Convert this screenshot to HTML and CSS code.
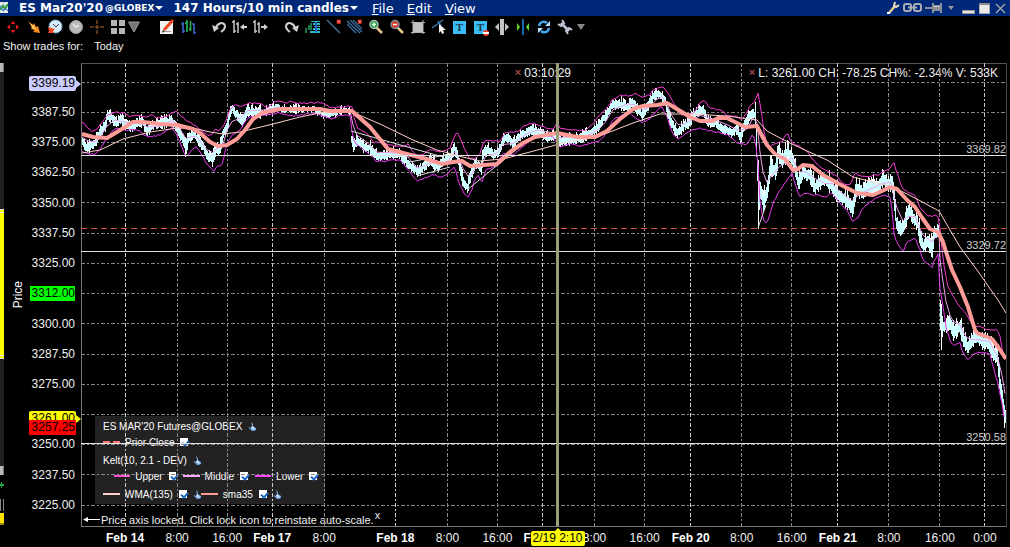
FILE: index.html
```
<!DOCTYPE html>
<html lang="en">

<head>
    <meta charset="UTF-8">
    <meta name="viewport" content="width=device-width, initial-scale=1.0">
    <title>ES Mar20'20 @GLOBEX</title>
    <link rel="stylesheet" href="styles.css">
</head>

<body>
    <header class="title-bar">
        <svg class="app-icon" width="8" height="14" viewBox="0 0 8 14"><path fill="#e8eef0" d="M0 1h8v11H0z"/><path fill="#b0c4cc" d="M0 4h8v1H0zM0 8h8v1H0zM3 1h1v11H3z"/><path fill="none" stroke="#2e9c3a" stroke-width="2" d="M0 9l3-4 2 3 3-5"/><path fill="none" stroke="#3a6ed0" d="M0 5l3 5 2-3 3 3"/></svg>
        <button type="button" class="title-button symbol">ES Mar20'20 <small>@GLOBEX</small><i class="caret"></i></button>
        <button type="button" class="title-button period">147 Hours/10 min candles<i class="caret"></i></button>
        <nav class="menu">
            <a href="#file"><u>F</u>ile</a>
            <a href="#edit"><u>E</u>dit</a>
            <a href="#view"><u>V</u>iew</a>
        </nav>
        <div class="window-tools">
            <button type="button" aria-label="Configure"><svg width="14" height="14" viewBox="0 0 14 14"><path fill="none" stroke="#e6cf96" stroke-width="2.4" d="M3 12l6-7"/><path fill="none" stroke="#eee0b8" stroke-width="2" d="M9 1L8 5l2 1 3-2"/><path fill="#fff" d="M1 11h3v2H1z"/></svg></button>
            <button type="button" aria-label="Link"><svg width="20" height="12" viewBox="0 0 20 12"><g fill="none" stroke="#a9acb4" stroke-width="2"><rect x="2" y="2" width="7" height="7" rx="2"/><rect x="12" y="2" width="7" height="7" rx="2"/><path d="M6 5.500h9"/></g></svg></button>
            <button type="button" aria-label="Pin"><svg width="20" height="12" viewBox="0 0 20 12"><path fill="#8d8f96" d="M1 5h8v2H1zM8 1h2v10H8zM10 3h7v6h-7zM16 1h2v10h-2z"/><path fill="#c5c7cb" d="M10 4h6v1h-6z"/></svg></button>
            <i class="caret dim"></i>
            <button type="button" class="window-button" aria-label="Minimize"><svg width="14" height="14" viewBox="0 0 14 14"><path fill="#e3e3e3" stroke="#999" d="M.5 9.500h12v3H.5z"/></svg></button>
            <button type="button" class="window-button" aria-label="Maximize"><svg width="14" height="14" viewBox="0 0 14 14"><path fill="#e9e9e9" stroke="#aaa" d="M1.500 2.500h10v10h-10z"/><path fill="#8c8c8c" d="M1 2h11v2H1z"/></svg></button>
            <button type="button" class="window-button" aria-label="Close"><svg width="14" height="14" viewBox="0 0 14 14"><path stroke="#aaa" stroke-width="1.300" d="M2 3l9 9M11 3l-9 9"/></svg></button>
        </div>
    </header>

    <div class="toolbar">
        <button type="button" aria-label="Move"><svg viewBox="0 0 16 16"><path fill="#f01818" d="M8 2l2.500 3h-5zM8 14l2.500-3h-5zM2 8l3-2.500v5zM14 8l-3-2.500v5z"/></svg></button>
        <button type="button" aria-label="Trade"><svg viewBox="0 0 16 16"><path fill="#f58a1c" d="M2 2l5 4 1-2 2 4 2-1 2 7-7-1 2-2-4-1 1-2z"/><path fill="#ffc65a" d="M4 4l4 3 3 5-5-3z"/></svg></button>
        <button type="button" aria-label="Active alert"><svg viewBox="0 0 16 16"><circle cx="8.500" cy="7.500" r="6.500" fill="#d8eefa" stroke="#7db4d6"/><path fill="none" stroke="#334" d="M6 5l3 3 3-3"/><path fill="#f04a22" d="M1 8l3 1 4 1-2 2 1 2H1l1-2z"/></svg></button>
        <button type="button" aria-label="Alert"><svg viewBox="0 0 16 16"><circle cx="8" cy="8" r="6.500" fill="#b9b9b9" stroke="#a2a2a2"/><path fill="none" stroke="#eee" stroke-width="1.400" d="M5 5l3 3 3-2"/></svg></button>
        <button type="button" aria-label="Crosshair"><svg viewBox="0 0 16 16"><path stroke="#7a4a22" stroke-width="1.500" stroke-dasharray="4 1" d="M1 8h14M8 1v14"/></svg></button>
        <button type="button" aria-label="Layout"><svg viewBox="0 0 16 16"><path fill="#b4b4b4" d="M1 1h6v6H1zM9 1h6v6H9zM1 9h6v6H1zM9 9h6v6H9z"/></svg></button>
        <button type="button" class="narrow" aria-label="More layouts"><svg viewBox="0 0 12 16"><path fill="#777" stroke="#999" d="M.5 3h11L6 13z"/></svg></button>
        <span class="space wide"></span>
        <button type="button" aria-label="Draw"><svg viewBox="0 0 16 16"><path fill="#f2f2f2" d="M1 2h13v13H1z"/><path stroke="#999" d="M3 12.500h9"/><path stroke="#e84a1c" stroke-width="3" d="M14 1L5 11"/><path fill="#333" d="M3 14l1-3 2 1z"/></svg></button>
        <button type="button" aria-label="Bar style"><svg viewBox="0 0 16 16"><path fill="none" stroke="#3a66d0" stroke-width="1.600" d="M1 5h2M3 3v11M3 12h2M12 5h2v9h2"/><path fill="none" stroke="#22a84a" stroke-width="1.800" d="M5 4h2M7 1v12M9 10h2M10.500 2v10"/></svg></button>
        <span class="space"></span>
        <button type="button" aria-label="Undo"><svg viewBox="0 0 16 16"><path fill="none" stroke="#d0d0d0" stroke-width="2" d="M5 9c1-5 8-7 9-2 0 3-1 4-4 6"/><path fill="#d0d0d0" d="M1 6l2 7 5-4z"/></svg></button>
        <button type="button" aria-label="Shorter range"><svg viewBox="0 0 16 16"><path fill="none" stroke="#c8c8c8" stroke-width="1.500" d="M2 1v13M0 3h2M2 12h2M6 3v11M4 5h2"/><path fill="#d0d0d0" d="M8 8l4-3v2h3v2h-3v2z"/></svg></button>
        <button type="button" aria-label="Longer range"><svg viewBox="0 0 16 16"><path fill="none" stroke="#c8c8c8" stroke-width="1.500" d="M2 1v13M0 3h2M2 12h2M6 3v11M4 5h2"/><path fill="#d0d0d0" d="M15 8l-4-3v2H8v2h3v2z"/></svg></button>
        <span class="space"></span>
        <button type="button" aria-label="Redo"><svg viewBox="0 0 16 16"><path fill="none" stroke="#d0d0d0" stroke-width="2" d="M11 9C10 4 3 2 2 7c0 3 1 4 4 6"/><path fill="#d0d0d0" d="M15 6l-2 7-5-4z"/></svg></button>
        <button type="button" aria-label="Volume profile"><svg viewBox="0 0 16 16"><path fill="none" stroke="#18a060" stroke-width="1.500" d="M1 9v5M4 6v5M6 4v7"/><path fill="#2eb8c8" d="M6 2h9v1H6zM8 4h7v2H8zM9 7h6v1H9zM8 9h7v2H8zM5 12h10v2H5z"/><path fill="#2560c0" d="M10 3h2v10h-2z"/></svg></button>
        <button type="button" aria-label="Trendline"><svg viewBox="0 0 16 16"><path stroke="#3c6ea0" stroke-width="1.500" d="M1 1l13 13"/><path fill="#fff" stroke="#f03c28" stroke-width="1.500" d="M11.500 1.500h2.500v2.500h-2.500z"/></svg></button>
        <button type="button" aria-label="Parallel lines"><svg viewBox="0 0 16 16"><path stroke="#3c6ea0" stroke-width="1.300" d="M0 2l13 12M3 1l12 12M6 1l9 9M0 5l9 9"/><path fill="#fff" stroke="#f03c28" stroke-width="1.500" d="M11.500 1.500h2.500v2.500h-2.500z"/></svg></button>
        <button type="button" aria-label="Zoom in"><svg viewBox="0 0 16 16"><path stroke="#e8c890" stroke-width="2.500" d="M8 8l6 6"/><circle cx="6" cy="5.500" r="4" fill="#28a048" stroke="#a8bcb8" stroke-width="1.500"/><path stroke="#dfd" stroke-width="1.500" d="M4 5.500h4M6 3.500v4"/></svg></button>
        <button type="button" aria-label="Zoom out"><svg viewBox="0 0 16 16"><path stroke="#e8c890" stroke-width="2.500" d="M8 8l6 6"/><circle cx="6" cy="5.500" r="4" fill="#d83a28" stroke="#7890a8" stroke-width="1.500"/><path stroke="#fff" stroke-width="1.500" d="M4 5.500h4"/></svg></button>
        <button type="button" aria-label="Fit"><svg viewBox="0 0 16 16"><path fill="#c4c4c4" d="M3 3h10v10H3z"/><path stroke="#b4b4b4" d="M3 1v14M13 1v14M1 3.500h14M1 13.500h14"/></svg></button>
        <button type="button" aria-label="Select"><svg viewBox="0 0 16 16"><path stroke="#3c78b0" stroke-width="1.500" d="M1 9L12 1M7 2l3 5"/><path fill="#f4f4f4" d="M8 5v9l2-2 1 3 2-1-1-3h3z"/></svg></button>
        <button type="button" class="text-tool">T</button>
        <button type="button" class="text-tool remove">T</button>
        <button type="button" aria-label="Expand bars"><svg viewBox="0 0 16 16"><path fill="#c4c4c4" d="M6 0h4v16H6zM1 8l4-4v8zM15 8l-4-4v8z"/></svg></button>
        <button type="button" aria-label="Squeeze bars"><svg viewBox="0 0 16 16"><path fill="#1768b0" d="M7 0h2v16H7z"/><path fill="#60dc28" d="M5 8L2 4v8zM11 8l3-4v8z"/></svg></button>
        <button type="button" aria-label="Refresh"><svg viewBox="0 0 16 16"><path fill="none" stroke="#42a8f4" stroke-width="2.500" d="M3 7c1-5 6-5 8-3M13 9c-1 5-6 5-8 3"/><path fill="#b8e4ff" d="M14 2v5H9zM2 14V9h5z"/></svg></button>
        <button type="button" aria-label="Settings"><svg viewBox="0 0 16 16"><path stroke="#b4b8cc" stroke-width="3" d="M4 4l8 8"/><path fill="none" stroke="#c4c8da" stroke-width="2" d="M5 1l2 3-3 3-3-2M15 11l-3-2-3 3 2 3"/></svg></button>
        <button type="button" class="narrow" aria-label="More tools"><svg viewBox="0 0 12 16"><path fill="#888" d="M2 5h8l-4 6z"/></svg></button>
    </div>

    <div class="trades">Show trades for: <span>Today</span></div>

    <main class="workspace">
        <div class="rail">
            <span class="rail-button"></span>
            <span class="rail-track upper"></span>
            <span class="rail-thumb"></span>
            <span class="rail-track lower"></span>
            <span class="rail-button"></span>
            <svg class="rail-plus" viewBox="0 0 4 20"><path fill="#1cb04c" d="M0 9h4v2H0zM1 7h1v6H1z"/></svg>
            <span class="rail-bars"></span>
            <span class="rail-lock"></span>
        </div>
        <div class="axis-title">Price</div>
        <div class="price-axis" id="price-axis">
            <ul class="price-labels">
                <li>3387.50</li>
                <li>3375.00</li>
                <li>3362.50</li>
                <li>3350.00</li>
                <li>3337.50</li>
                <li>3325.00</li>
                <li class="marked">3312.00</li>
                <li>3300.00</li>
                <li>3287.50</li>
                <li>3275.00</li>
                <li>&nbsp;</li>
                <li>3250.00</li>
                <li>3237.50</li>
                <li>3225.00</li>
            </ul>
        </div>

        <div class="plot" id="plot">
            <form class="legend">
                <div class="legend-group">
                    <div class="row title">ES MAR'20 Futures@GLOBEX <svg class="wrench" viewBox="0 0 9 9"><path fill="#6fa4dc" d="M4 0l2 2v2l3 2v2L7 9H5L1 5l3 1 1-2z"/><path fill="#d4e8fc" d="M5 4l3 3-1 1-3-2z"/></svg></div>
                    <div class="row"><i class="swatch prior"></i><label for="prior">Prior Close</label><input type="checkbox" id="prior" checked></div>
                </div>
                <div class="legend-group">
                    <div class="row title">Kelt(10, 2.1 - DEV) <svg class="wrench" viewBox="0 0 9 9"><path fill="#6fa4dc" d="M4 0l2 2v2l3 2v2L7 9H5L1 5l3 1 1-2z"/><path fill="#d4e8fc" d="M5 4l3 3-1 1-3-2z"/></svg></div>
                    <div class="row indent">
                        <i class="swatch kelt-upper"></i><label for="upper">Upper</label><input type="checkbox" id="upper" checked>
                        <i class="swatch kelt-middle"></i><label for="middle">Middle</label><input type="checkbox" id="middle" checked>
                        <i class="swatch kelt-lower"></i><label for="lower">Lower</label><input type="checkbox" id="lower" checked>
                    </div>
                </div>
                <div class="row">
                    <i class="swatch wma"></i><label for="wma">WMA(135)</label><input type="checkbox" id="wma" checked>
                    <svg class="wrench" viewBox="0 0 9 9"><path fill="#6fa4dc" d="M4 0l2 2v2l3 2v2L7 9H5L1 5l3 1 1-2z"/><path fill="#d4e8fc" d="M5 4l3 3-1 1-3-2z"/></svg>
                    <i class="swatch sma"></i><label for="sma">sma35</label><input type="checkbox" id="sma" checked>
                    <svg class="wrench" viewBox="0 0 9 9"><path fill="#6fa4dc" d="M4 0l2 2v2l3 2v2L7 9H5L1 5l3 1 1-2z"/><path fill="#d4e8fc" d="M5 4l3 3-1 1-3-2z"/></svg>
                </div>
            </form>
            <div class="readout time"><button type="button">×</button>03:10:29</div>
            <div class="readout last"><button type="button">×</button>L: 3261.00 CH: -78.25 CH%: -2.34% V: 533K</div>
            <div class="axis-note">
                <svg width="17" height="7" viewBox="0 0 17 7"><path fill="#fff" d="M0 3.500L5 1v5zM4 3h13v1H4z"/></svg>
                Price axis locked. Click lock icon to reinstate auto-scale. <button type="button">x</button>
            </div>
            <svg class="chart" id="chart" viewBox="81 63 925 463" preserveAspectRatio="none"></svg>
        </div>
        <div class="time-axis" id="time-axis"></div>
    </main>

    <script src="chart.js"></script>
</body>

</html>
```
FILE: styles.css
```
* {
    box-sizing: border-box;
}

body {
    margin: 0;
    min-height: 100vh;
    display: flex;
    flex-direction: column;
    overflow: hidden;
    background-color: #000;
    color: #f0f0f0;
    font-family: "Liberation Sans", Arial, sans-serif;
    font-size: 12px;
}

button {
    margin: 0;
    padding: 0;
    border: none;
    background: none;
    color: inherit;
    font: inherit;
    cursor: pointer;
}

svg {
    display: block;
}

/* title bar */
.title-bar {
    height: 16px;
    display: flex;
    align-items: center;
    background-color: #002878;
    color: #fff;
    font-family: "DejaVu Sans", Verdana, sans-serif;
    white-space: nowrap;
}
.app-icon {
    margin-right: 11px;
}
.title-button {
    display: flex;
    align-items: center;
    font-size: 12px;
    font-weight: bold;
}
.title-button small {
    margin-left: 2px;
    font-size: 9px;
}
.period {
    margin-left: 10px;
}
.caret {
    margin-left: 1px;
    border: 4px solid transparent;
    border-top-color: #fff;
    border-bottom: none;
}
.caret.dim {
    border-width: 3px;
    border-top-width: 4px;
    border-top-color: #999;
}
.menu {
    display: flex;
    gap: 13px;
    margin-left: 14px;
    font-size: 13px;
    line-height: 15px;
}
.menu a {
    color: #fff;
    text-decoration: none;
}
.window-tools {
    display: flex;
    align-items: center;
    gap: 2px;
    margin-left: auto;
    padding-right: 2px;
}
.window-tools .caret {
    margin: 0 6px 0 2px;
}

/* toolbar */
.toolbar {
    height: 22px;
    padding-left: 2px;
    display: flex;
    align-items: center;
}
.toolbar button {
    width: 21px;
    display: flex;
    justify-content: center;
}
.toolbar svg {
    width: 16px;
    height: 16px;
}
.toolbar .narrow {
    width: 12px;
}
.toolbar .narrow svg {
    width: 12px;
}
.toolbar .space {
    width: 10px;
}
.toolbar .wide {
    width: 16px;
}
.toolbar .text-tool {
    position: relative;
    width: 13px;
    height: 13px;
    margin: 0 4px;
    background-color: #38bdf8;
    color: #234;
    font: bold 11px/13px "Liberation Serif", serif;
}
.text-tool.remove::after {
    content: "";
    position: absolute;
    right: -2px;
    bottom: -2px;
    width: 6px;
    height: 6px;
    border-radius: 50%;
    background: linear-gradient(#f03c28 2px, #fff 2px, #fff 4px, #f03c28 4px);
}

.trades {
    height: 24px;
    padding-left: 3px;
    font-size: 11px;
    line-height: 17px;
}
.trades span {
    margin-left: 8px;
}

/* chart area */
.workspace {
    flex: 1;
    display: grid;
    grid-template-columns: 4px 25px 52px 1fr;
    grid-template-rows: 1fr 20px;
    padding: 1px 3px 0 0;
}
.rail {
    grid-row: 1 / 3;
    display: flex;
    flex-direction: column;
    padding-bottom: 22px;
}
.rail-button {
    height: 9px;
    background-color: #b8b8b8;
    border-right: 1px solid #777;
}
.rail-track {
    background-color: #202020;
}
.rail-track.upper {
    flex: 137;
}
.rail-track.lower {
    flex: 107;
}
.rail-thumb {
    flex: 143;
    background-color: #ff0;
    border-top: 4px double #ddd;
    border-bottom: 4px double #ddd;
}
.rail-plus {
    width: 4px;
    height: 20px;
}
.rail-bars {
    height: 12px;
    margin: 4px 0 2px;
    border-left: 1px solid #888;
    border-right: 1px solid #888;
}
.rail-lock {
    height: 12px;
    background-color: #ffe000;
    border-bottom: 2px solid #a08000;
}

.axis-title {
    align-self: center;
    margin-right: auto;
    padding-right: 7px;
    color: #fff;
    writing-mode: vertical-rl;
    transform: rotate(180deg);
}
.price-axis {
    position: relative;
    padding: 42px 6px 14px 0;
    text-align: right;
}
.price-labels {
    height: 100%;
    margin: 0;
    padding: 0;
    display: flex;
    flex-direction: column;
    justify-content: space-between;
    list-style: none;
    line-height: 15px;
}
.marked {
    margin-left: 1px;
    background-color: #0f0;
    color: #000;
}
.tag {
    position: absolute;
    left: 0;
    width: 47px;
    margin-top: -8px;
    padding-right: 1px;
    border-radius: 2px;
    color: #000;
    line-height: 15px;
}
.tag.pointer::after {
    content: "";
    position: absolute;
    left: 100%;
    top: 4px;
    border: 4px solid transparent;
    border-left: 5px solid;
    border-right: none;
}
.tag.high {
    background-color: #ccf;
}
.tag.high::after {
    border-left-color: #ccf;
}
.tag.last {
    background-color: #ff0;
}
.tag.last::after {
    border-left-color: #ff0;
}
.tag.low {
    background-color: #f00;
    border-radius: 0;
}

.plot {
    position: relative;
    min-width: 0;
    border: 1px solid #777;
    border-top-color: #555;
    border-right-color: #444;
}
/* starts on the plot's left and top border */
.chart {
    position: absolute;
    left: -1px;
    top: -1px;
    width: calc(100% + 1px);
    height: calc(100% + 1px);
    pointer-events: none;
}
.chart * {
    fill: none;
    vector-effect: non-scaling-stroke;
}
.chart .grid {
    stroke: #888;
    stroke-dasharray: 4 2 2 2;
}
.chart .grid.day {
    stroke: #ccc;
}
.chart .level {
    stroke: #e0e0e0;
    stroke-width: 1px;
}
.chart .prior-close {
    stroke: #d85050;
    stroke-dasharray: 6 4;
}
.chart .bars {
    stroke: #cff;
    stroke-width: 1px;
}
.chart .wicks {
    stroke: #fff;
}
.chart .band {
    stroke: #f33ad0;
}
.chart .band.low {
    stroke: #e838f0;
}
.chart .mid {
    stroke: #f0a0f0;
}
.chart .slow {
    stroke: #ffd0c8;
}
.chart .fast {
    stroke: #ff9c98;
    stroke-width: 4px;
    stroke-linejoin: round;
}
.chart .trend {
    stroke: #ddd;
}
.chart .cursor {
    stroke: #9c9c78;
    stroke-width: 3px;
}
.level-label {
    position: absolute;
    right: 0;
    color: #ccc;
    font-size: 11px;
    line-height: 11px;
    margin-top: -12px;
}

.readout {
    position: absolute;
    top: 2px;
    line-height: 15px;
    white-space: nowrap;
}
.readout button,
.axis-note button {
    font-size: 11px;
    line-height: 11px;
}
.readout button {
    margin-right: 3px;
    color: #a04848;
    font-weight: bold;
    vertical-align: 1px;
}
.readout.time {
    right: 435px;
}
.readout.last {
    right: 8px;
}

.legend {
    position: absolute;
    left: 13px;
    bottom: 22px;
    width: 230px;
    padding: 2px 8px 0;
    height: 88px;
    display: flex;
    flex-direction: column;
    gap: 2px;
    background-color: #222;
    color: #fff;
    font-size: 10px;
    white-space: nowrap;
}
.row {
    height: 16px;
    display: flex;
    align-items: center;
}
.row.indent {
    padding-left: 11px;
}
.wrench {
    width: 9px;
    height: 9px;
    margin-left: 5px;
}
.swatch {
    width: 17px;
    height: 2px;
    margin-right: 5px;
}
.row input {
    position: relative;
    appearance: none;
    width: 8px;
    height: 8px;
    margin: 0 0 0 6px;
    background-color: #fff;
}
.row input:checked::after {
    content: "";
    position: absolute;
    left: 3px;
    top: 1px;
    width: 3px;
    height: 5px;
    border: solid #1c68c8;
    border-width: 0 2px 2px 0;
    transform: rotate(40deg);
}
.row input + .swatch {
    margin-left: 7px;
}
.prior {
    background: linear-gradient(90deg, #f77 7px, transparent 7px, transparent 10px, #f77 10px);
}
.kelt-upper {
    background-color: #ff4cd0;
}
.kelt-middle {
    background-color: #ffa8ff;
}
.kelt-lower {
    background-color: #f4f;
}
.wma {
    background-color: #ffd0c8;
}
.sma {
    background-color: #ff9c98;
}

.axis-note {
    position: absolute;
    left: 1px;
    bottom: -3px;
    display: flex;
    align-items: center;
    gap: 1px;
    font-size: 11px;
    line-height: 14px;
    white-space: nowrap;
}
.axis-note button {
    margin-bottom: 8px;
}

.time-axis {
    grid-column: 4;
    position: relative;
}
.time-axis span {
    position: absolute;
    top: 4px;
    transform: translateX(-50%);
    line-height: 15px;
    white-space: nowrap;
}
.time-axis .day {
    color: #fff;
    font-weight: bold;
}
.time-axis .current {
    padding: 0 2px;
    border-radius: 2px;
    background-color: #ff0;
    color: #000;
}
.time-axis .current::before {
    content: "";
    position: absolute;
    left: 50%;
    top: -3px;
    margin-left: -4px;
    border: 4px solid transparent;
    border-top: none;
    border-bottom-color: #ff0;
}
```
FILE: chart.js
```
const chart = document.querySelector("#chart");
const plot = document.querySelector("#plot");
const timeAxis = document.querySelector("#time-axis");
const priceAxis = document.querySelector("#price-axis");

const LEFT = 81, TOP = 63, WIDTH = 925, HEIGHT = 463;

const ticks = [
    [125, "Feb 14"], [177, "8:00"], [227, "16:00"], [272, "Feb 17"], [324, "8:00"],
    [395, "Feb 18"], [447, "8:00"], [497, "16:00"], [542, "Feb 19"], [594, "8:00"],
    [644, "16:00"], [690, "Feb 20"], [741, "8:00"], [791, "16:00"], [837, "Feb 21"],
    [888, "8:00"], [939, "16:00"], [984, "0:00"]
];

// each "/" is a session gap
const price = "82,140 85,147 89,147 95,142 100,132 105,125 107,117 110,117 115,123 120,120 127,125 132,127 137,123 142,122 147,131 152,125 157,124 163,123 171,120 175,125 180,135 186,147 188,138 193,135 198,139 203,148 207,156 212,158 216,148 219,150 223,133 227,125 230,112 232,109 237,116 242,121 247,111 257,112 263,113 270,109 276,105 280,109 290,110 300,109 313,109 318,113 328,115 337,113 343,110 350,112 / 351,140 353,146 357,140 363,147 370,149 378,157 385,155 392,153 400,155 407,163 412,168 418,172 423,167 430,160 437,168 443,160 450,157 454,148 457,155 460,170 463,183 467,187 470,177 475,163 481,167 483,153 488,149 493,155 498,153 503,140 508,138 513,145 518,137 525,133 532,129 537,132 547,137 555,135 560,142 567,140 580,138 590,133 597,128 602,120 607,113 612,105 620,104 627,107 633,103 637,110 642,115 647,107 653,95 660,95 665,103 668,115 672,125 677,134 682,127 688,123 693,115 700,110 703,109 707,122 713,123 718,125 723,130 730,132 737,130 740,138 743,128 748,118 752,113 755,115 757,170 758,205 760,190 763,203 767,190 770,167 775,172 778,153 782,160 787,152 792,158 795,168 798,183 803,172 810,177 815,187 822,180 828,182 835,192 842,198 848,202 852,210 856,188 862,192 867,188 873,187 878,187 883,178 887,185 892,183 894,200 896,223 901,230 905,220 909,210 913,218 917,223 920,237 923,245 927,242 932,248 934,233 938,230 / 940,313 942,328 945,327 949,323 953,332 960,328 963,338 967,347 970,342 975,337 982,342 988,342 993,353 997,356 1000,387 1003,407 1005,417";

const upper = "82,122 87,127 92,131 97,129 102,123 107,115 115,112 123,113 130,117 137,115 147,117 152,115 158,118 167,116 171,114 176,111 180,115 187,121 192,123 197,127 203,133 211,136 215,129 218,131 223,127 227,118 230,110 235,105 242,107 248,103 260,104 268,107 275,101 285,103 292,101 298,103 315,103 317,101 330,107 343,107 352,106 354,118 358,128 367,133 373,142 383,143 393,146 402,147 408,144 415,155 423,155 430,149 440,152 450,148 457,131 462,142 465,150 470,159 477,157 480,153 483,143 488,140 493,141 500,142 505,132 517,132 525,125 533,123 543,127 554,129 557,123 560,128 570,130 580,131 587,129 593,123 600,115 607,108 612,100 620,95 632,96 635,93 643,97 650,95 653,90 663,86 668,93 675,105 682,115 693,113 700,103 704,100 710,108 720,110 727,115 737,117 742,119 747,113 750,105 755,102 758,93 761,110 765,138 770,147 775,143 782,142 787,132 791,142 797,145 808,152 813,160 820,167 828,172 835,175 843,183 850,185 855,173 863,177 878,175 883,171 890,169 894,162 897,173 903,190 915,195 920,207 927,215 932,217 935,214 939,218 943,260 948,287 957,303 965,313 975,327 980,326 985,329 997,330 1000,337 1003,353 1006,368";

const lower = "82,152 87,154 95,154 100,150 107,137 115,128 127,130 137,129 147,137 160,135 172,128 177,135 182,148 186,157 192,150 197,147 202,155 207,165 211,167 213,173 217,166 222,165 224,157 227,143 232,135 240,130 248,118 263,115 278,113 293,116 315,113 328,118 333,119 340,115 350,115 353,138 357,145 367,152 377,162 390,160 400,160 408,170 417,181 425,178 433,175 442,177 448,173 455,167 458,180 463,192 468,197 472,190 474,182 478,175 482,182 486,170 497,165 503,153 513,155 527,143 538,135 553,137 560,148 568,144 580,146 592,143 600,141 605,135 613,120 628,112 635,117 643,123 650,118 657,110 662,107 667,117 672,132 678,140 685,133 700,128 707,130 717,132 728,135 738,143 747,145 753,133 757,150 760,200 763,220 767,223 773,203 780,190 792,173 797,190 800,197 805,193 815,195 825,197 832,193 840,203 848,212 852,221 857,219 863,208 873,200 883,195 891,198 894,233 897,243 903,252 907,242 915,238 920,250 923,260 932,267 937,255 939,252 940,290 942,300 946,327 950,340 953,346 960,343 963,353 967,360 973,355 977,352 990,354 993,367 997,380 1002,403 1005,424";

const fast = "82,134 93,137 107,138 117,132 133,122 143,122 160,124 177,125 193,129 200,133 210,142 218,146 227,145 237,139 245,130 253,119 262,113 280,109 300,109 320,109 330,111 352,111 370,127 388,149 403,153 423,158 442,164 453,162 462,161 470,166 497,164 510,152 523,143 535,137 557,133 577,137 595,137 607,131 620,119 633,109 643,106 657,105 667,103 677,109 690,117 700,121 713,121 718,118 727,118 737,123 745,127 757,126 760,132 767,145 775,154 785,159 793,170 798,169 803,165 812,166 823,175 843,186 857,193 873,195 882,191 890,187 897,189 907,200 915,207 923,219 930,229 938,232 943,242 947,255 952,270 960,287 968,307 975,330 977,333 992,339 998,347 1006,359";

const slow = "82,153 100,150 123,139 150,132 177,128 193,128 210,132 223,134 240,132 273,124 300,117 320,113 352,112 380,124 413,140 437,150 463,157 480,161 503,159 530,152 563,143 597,137 633,123 660,114 693,114 727,116 757,120 767,131 780,138 790,143 807,151 827,160 853,177 893,187 913,197 939,211 950,230 960,247 977,270 998,300 1006,313";

function parse(str) {
    return str.trim().split(" ").map(p => p.split(",").map(Number));
}

function valueAt(points, x) {
    let i = points.findIndex(p => p[0] >= x);
    if (i <= 0) {
        return points[i === 0 ? 0 : points.length - 1][1];
    }
    let [x0, y0] = points[i - 1];
    let [x1, y1] = points[i];
    return y0 + (y1 - y0) * (x - x0) / (x1 - x0);
}

function add(d, className) {
    let path = document.createElementNS("http://www.w3.org/2000/svg", "path");
    path.setAttribute("d", d);
    path.setAttribute("class", className);
    chart.appendChild(path);
}

function addLabel(parent, tag, className, text, side, percent) {
    let label = document.createElement(tag);
    label.className = className;
    label.textContent = text;
    label.style[side] = percent + "%";
    parent.appendChild(label);
}

let seed = 7;
function random() {
    seed = (seed * 16807) % 2147483647;
    return seed / 2147483647;
}

function priceToY(value) {
    return 112.5 + (3387.5 - value) * 2.414;
}

// bars, one per pixel column
function drawBars() {
    let bars = "";
    let wicks = "";
    price.split("/").forEach(function (part) {
        let points = parse(part);
        let last = points[points.length - 1][0];
        for (let x = points[0][0]; x <= last; x++) {
            let y = valueAt(points, x);
            let slope = Math.abs(valueAt(points, x + 1) - y);
            let half = (x > 755 ? 4 : 2.5) + random() * 2 + Math.min(slope, 12) / 2;
            let shift = (random() - 0.5) * 3;
            if (x > 260 && x < 352) {
                half = half * 0.6;
            }
            bars += `M${x + 0.5} ${Math.round(y + shift - half)}V${Math.round(y + shift + half)}`;
            if (random() > 0.6) {
                let extra = random() * (x > 755 ? 8 : 4);
                wicks += `M${x + 0.5} ${Math.round(y - half - extra)}V${Math.round(y + half + extra / 2)}`;
            }
        }
    });
    wicks += "M758.5 160V229M940.5 300V330M941.500 320V350M212.5 160V167M107.5 110V118M185.5 145V157M1004.5 405V428";
    add(wicks, "wicks");
    add(bars, "bars");
}

// same small wobble on a band as the prices have
function wobble(points) {
    let d = "";
    for (let x = 82; x <= 1005; x += 2) {
        d += (d ? "L" : "M") + x + " " + (valueAt(points, x) + random() * 1.6 - 0.8).toFixed(1);
    }
    return d;
}

function line(points) {
    return "M" + points.map(p => p.join(" ")).join("L");
}

for (let i = 0; i < 15; i++) {
    let y = Math.floor(82 + i * 30.23) + 0.5;
    add(`M81 ${y}H1006`, "grid");
}
ticks.forEach(function (tick) {
    let isDay = tick[1].startsWith("Feb") || tick[1] === "0:00";
    add(`M${tick[0] + 0.5} 63V526`, isDay ? "grid day" : "grid");
    addLabel(timeAxis, "span", tick[1].startsWith("Feb") ? "day" : "", tick[1], "left", (tick[0] - LEFT) / WIDTH * 100);
});
add(`M81 228.5H1006`, "prior-close");

drawBars();
let upperPoints = parse(upper);
let lowerPoints = parse(lower);
let middle = lowerPoints.map(p => [p[0], (p[1] + valueAt(upperPoints, p[0])) / 2]);
add(wobble(upperPoints), "band");
add(wobble(lowerPoints), "band low");
add(line(middle), "mid");
add("M351 131L443 157M417 176L450 167M467 190L539 131M410 162L445 155M758 228L766 205", "trend");
add(line(parse(slow)), "slow");
add(line(parse(fast)), "fast");

[3369.82, 3329.72, 3250.58].forEach(function (value) {
    let y = Math.floor(priceToY(value)) + 0.5;
    add(`M81 ${y}H1006`, "level");
    addLabel(plot, "span", "level-label", value, "top", (y - TOP) / HEIGHT * 100);
});
add("M557.5 63V526", "cursor");

addLabel(timeAxis, "span", "current", "2/19 2:10", "left", (557 - LEFT) / WIDTH * 100);
addLabel(priceAxis, "span", "tag pointer high", "3399.19", "top", (priceToY(3399.19) - TOP) / HEIGHT * 100);
addLabel(priceAxis, "span", "tag pointer last", "3261.00", "top", (priceToY(3261) - TOP) / HEIGHT * 100);
addLabel(priceAxis, "span", "tag low", "3257.25", "top", (priceToY(3257.25) - TOP) / HEIGHT * 100);
```
